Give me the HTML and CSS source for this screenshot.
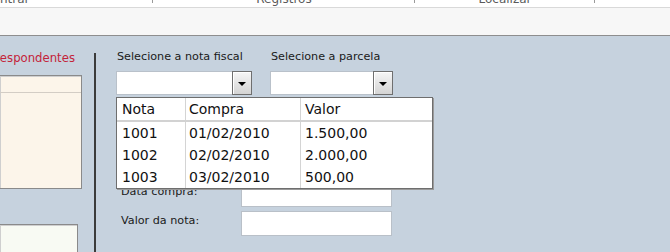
FILE: index.html
```html
<!DOCTYPE html>
<html lang="pt">
<head>
<meta charset="utf-8">
<title>Registros</title>
<link rel="stylesheet" href="styles.css">
</head>
<body>
<div class="app">
  <div class="menubar">
    <div class="menu-item seg1"><span>Central</span></div>
    <div class="menu-item seg2"><span>Registros</span></div>
    <div class="menu-item seg3"><span>Localizar</span></div>
    <div class="menu-item seg4"></div>
  </div>
  <div class="toolbar"></div>
  <div class="main">
    <div class="left-col">
      <div class="left-title"><span>Registros correspondentes</span></div>
      <div class="box box-cream"><div class="box-head"></div></div>
      <div class="box box-green"></div>
    </div>
    <div class="divider"></div>
    <div class="form">
      <div class="label-row">
        <div class="label w1">Selecione a nota fiscal</div>
        <div class="label w2">Selecione a parcela</div>
      </div>
      <div class="combo-row">
        <div class="combo w1"><div class="combo-text"></div><div class="combo-btn"><span class="tri"></span></div></div>
        <div class="combo w2"><div class="combo-text"></div><div class="combo-btn"><span class="tri"></span></div></div>
      </div>
      <div class="fields">
        <div class="field-row"><div class="field-label">Data compra:</div><div class="input"></div></div>
        <div class="field-row"><div class="field-label">Valor da nota:</div><div class="input"></div></div>
      </div>
      <div class="dropdown">
        <div class="grid head">
          <div class="c c1">Nota</div><div class="c c2">Compra</div><div class="c c3">Valor</div>
        </div>
        <div class="grid body-rows">
          <div class="c c1">1001</div><div class="c c2">01/02/2010</div><div class="c c3">1.500,00</div>
          <div class="c c1">1002</div><div class="c c2">02/02/2010</div><div class="c c3">2.000,00</div>
          <div class="c c1">1003</div><div class="c c2">03/02/2010</div><div class="c c3">500,00</div>
        </div>
      </div>
    </div>
  </div>
</div>
</body>
</html>
```

FILE: styles.css
```css
* { box-sizing: border-box; }
html, body { margin: 0; padding: 0; }
body {
  width: 670px;
  height: 252px;
  overflow: hidden;
  font-family: "DejaVu Sans", sans-serif;
  background: #c6d2de;
}
.app { display: flex; flex-direction: column; height: 252px; }

.menubar {
  display: flex;
  height: 8px;
  background: #ffffff;
  border-bottom: 1px solid #d9d9d9;
  overflow: hidden;
  margin-left: -141px;
  flex: none;
}
.menu-item {
  position: relative;
  display: flex;
  justify-content: center;
  font-size: 12px;
  line-height: 12px;
  color: #5a5a5a;
  flex: none;
}
.menu-item span { margin-top: -7px; }
.menu-item::after {
  content: "";
  position: absolute;
  right: 0;
  top: 0;
  width: 1px;
  height: 3px;
  background: #9a9a9a;
}
.seg1 { width: 294px; }
.seg2 { width: 262px; }
.seg3 { width: 180px; }
.seg4 { flex: 1; }
.seg4::after { display: none; }

.toolbar {
  height: 28px;
  background: #f7f7f7;
  border-bottom: 1px solid #8e8e8e;
  flex: none;
}

.main {
  flex: 1;
  display: flex;
  background: #c6d2de;
  min-height: 0;
}

.left-col {
  width: 82px;
  flex: none;
  padding-top: 14px;
  display: flex;
  flex-direction: column;
}
.left-title {
  display: flex;
  justify-content: flex-end;
  overflow: hidden;
  white-space: nowrap;
  padding-right: 7px;
  font-size: 11.7px;
  line-height: 16px;
  color: #c4233a;
  height: 16px;
}
.box {
  border: 1px solid #8a8a8a;
  box-shadow: inset 1px 1px 0 #cfcfcf;
  border-left: none;
}
.box-cream {
  margin-top: 9px;
  height: 114px;
  background: #fcf5ea;
}
.box-head {
  height: 17px;
  border-bottom: 1px solid #d3cdc5;
}
.box-green {
  margin-top: 35px;
  width: 78px;
  flex: 1;
  border-bottom: none;
  background: #f8faf3;
}

.divider {
  width: 2px;
  margin-left: 12px;
  margin-top: 17px;
  background: #3b3b3b;
  flex: none;
}

.form {
  position: relative;
  margin-left: 20px;
  padding-top: 13px;
  flex: 1;
}
.w1 { width: 136px; }
.w2 { width: 123px; }
.label-row, .combo-row { display: flex; gap: 18px; }
.label {
  font-size: 11.2px;
  line-height: 16px;
  color: #1a1a1a;
  padding-left: 1px;
  white-space: nowrap;
}
.combo-row { margin-top: 6px; }
.combo {
  display: flex;
  height: 24px;
  background: #ffffff;
  border: 1px solid #b9c1ca;
  border-right: none;
}
.combo-text { flex: 1; }
.combo-btn {
  width: 20px;
  margin-top: -1px;
  height: 24px;
  border: 1px solid #6f6f6f;
  box-shadow: inset 1px 1px 0 #ffffff;
  background: linear-gradient(#f6f6f6, #d4d4d4);
  display: flex;
  align-items: center;
  justify-content: center;
}
.tri {
  width: 0;
  height: 0;
  border-left: 4px solid transparent;
  border-right: 4px solid transparent;
  border-top: 4px solid #000000;
  margin-top: 1px;
}

.fields {
  margin-top: 87px;
  display: flex;
  flex-direction: column;
  gap: 4px;
}
.field-row {
  display: flex;
  align-items: center;
}
.field-label {
  width: 125px;
  padding-left: 5px;
  font-size: 11.2px;
  line-height: 16px;
  color: #1a1a1a;
  margin-top: -6px;
}
.input {
  width: 151px;
  height: 25px;
  background: #ffffff;
  border: 1px solid #b9c0c8;
}

.dropdown {
  position: absolute;
  left: 0;
  top: 61px;
  width: 317px;
  height: 92px;
  background: #ffffff;
  border: 1px solid #6e6e6e;
  box-shadow: 1px 1px 0 #9a9a9a;
  font-size: 14px;
  color: #111111;
}
.grid {
  display: grid;
  grid-template-columns: 69px 115px 1fr;
}
.head {
  border-bottom: 2px solid #d2d2d2;
}
.head .c { height: 22px; line-height: 22px; }
.body-rows .c { height: 22px; line-height: 22px; }
.c { white-space: nowrap; }
.c1 { border-right: 1px solid #d4d4d4; padding-left: 5px; }
.c2 { border-right: 1px solid #d4d4d4; padding-left: 3px; }
.c3 { padding-left: 4px; }
```
